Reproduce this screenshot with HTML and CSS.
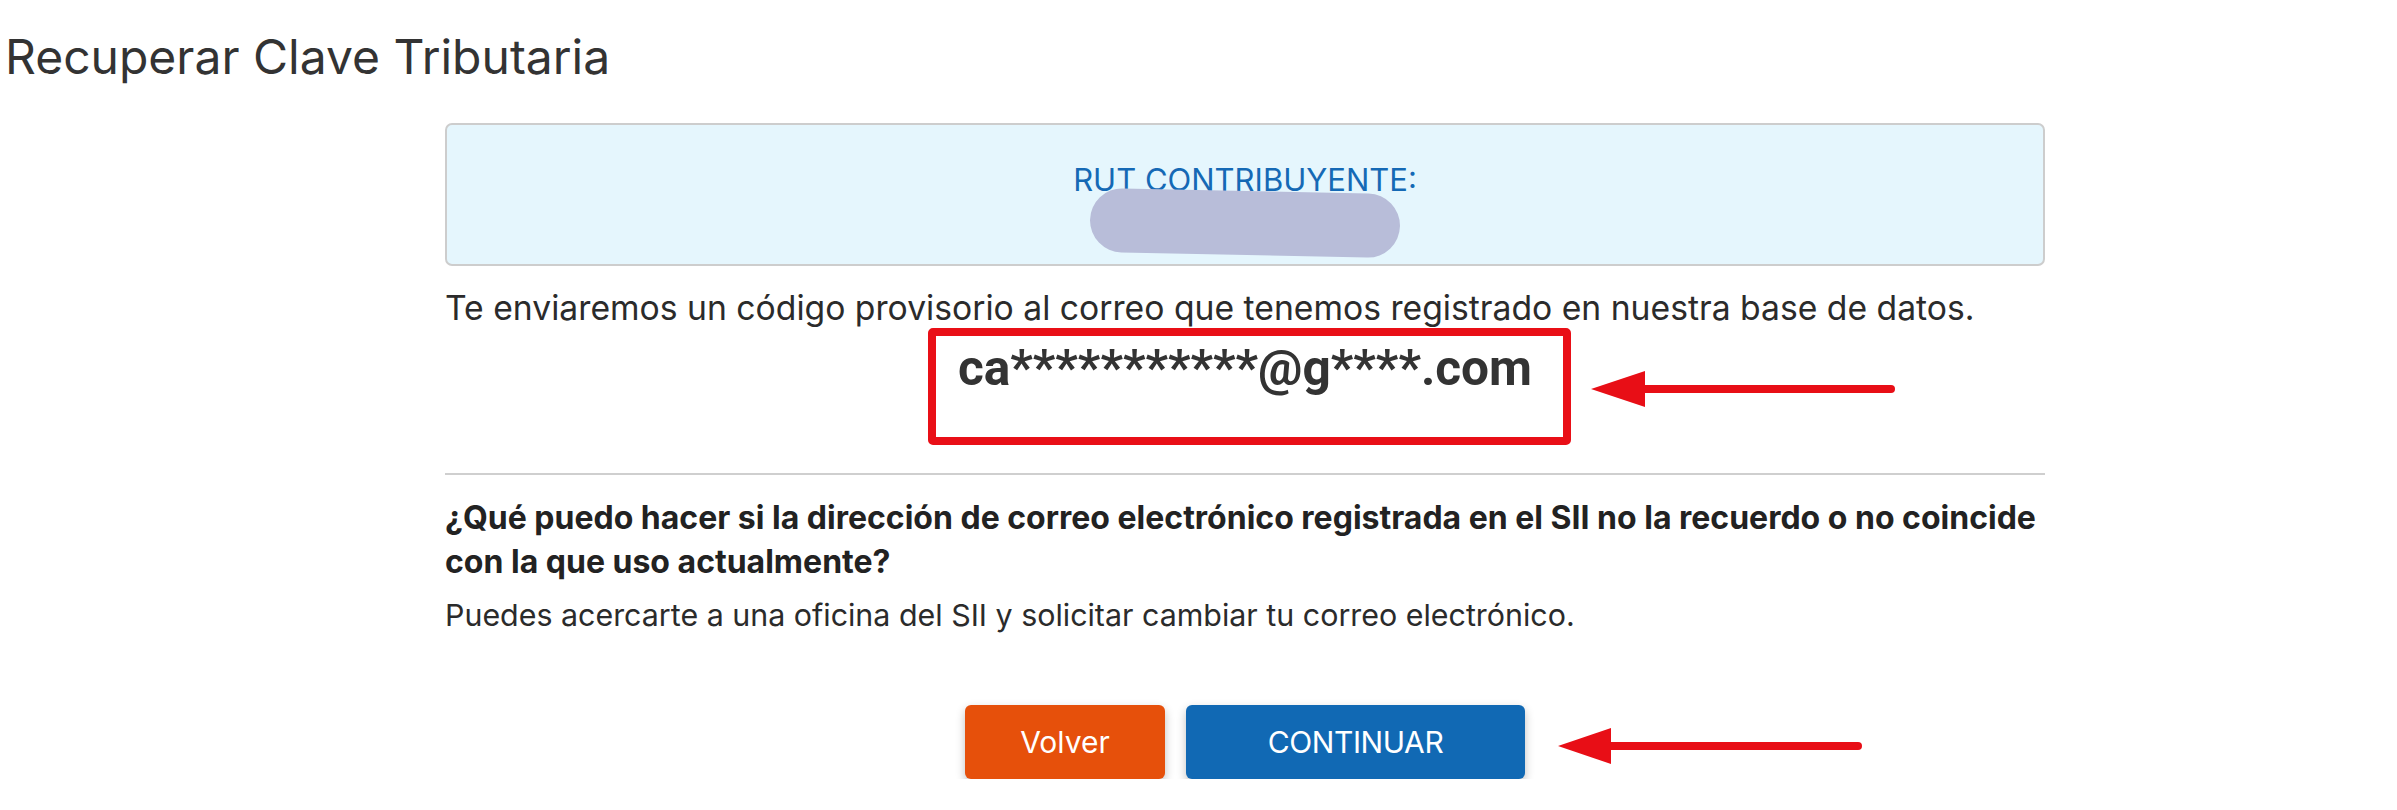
FILE: index.html
```html
<!DOCTYPE html>
<html lang="es">

<head>
    <meta charset="UTF-8">
    <meta name="viewport" content="width=device-width, initial-scale=1.0">
    <title>Recuperar Clave Tributaria</title>
    <link rel="stylesheet" href="styles.css">
</head>

<body>

    <h1 class="page-title">Recuperar Clave Tributaria</h1>

    <div class="content">

        <div class="rut-box">
            <p class="rut-label">RUT CONTRIBUYENTE:</p>
            <div class="rut-hidden"></div>
        </div>

        <p class="info">Te enviaremos un código provisorio al correo que tenemos registrado en nuestra base de datos.</p>

        <div class="mail-row">
            <div class="mail-mark">
                <p class="mail">ca***********@g****.com</p>
                <svg class="arrow arrow-mail" width="305" height="40" viewBox="0 0 305 40">
                    <line x1="50" y1="20" x2="300" y2="20" stroke="#e80e16" stroke-width="8" stroke-linecap="round" />
                    <polygon points="0,20 54,2 54,38" fill="#e80e16" />
                </svg>
            </div>
        </div>

        <hr class="sep">

        <p class="question">¿Qué puedo hacer si la dirección de correo electrónico registrada en el SII no la recuerdo o no coincide con la que uso actualmente?</p>
        <p class="answer">Puedes acercarte a una oficina del SII y solicitar cambiar tu correo electrónico.</p>

        <div class="actions">
            <div class="btn-group">
                <button class="btn btn-back">Volver</button>
                <button class="btn btn-next">CONTINUAR</button>
                <svg class="arrow arrow-btn" width="305" height="40" viewBox="0 0 305 40">
                    <line x1="50" y1="20" x2="300" y2="20" stroke="#e80e16" stroke-width="8" stroke-linecap="round" />
                    <polygon points="0,20 53,2 53,38" fill="#e80e16" />
                </svg>
            </div>
        </div>

    </div>

</body>

</html>
```

FILE: styles.css
```css
* {
    margin: 0;
    padding: 0;
    box-sizing: border-box;
}

body {
    font-family: Inter, Roboto, "Liberation Sans", Arial, sans-serif;
    color: #2b2b2b;
    background: #fff;
}

.page-title {
    font-size: 48px;
    font-weight: 400;
    line-height: normal;
    color: #333;
    margin-top: 27px;
    margin-left: 5px;
}

.content {
    width: 1600px;
    margin-left: 445px;
}

.rut-box {
    margin-top: 37px;
    background: #e5f6fd;
    border: 2px solid #cdcdcd;
    border-radius: 7px;
    padding: 36px 0 9px;
    text-align: center;
}

.rut-label {
    font-size: 31px;
    line-height: normal;
    color: #1569b5;
}

.rut-hidden {
    width: 310px;
    height: 64px;
    margin: -7px auto 0;
    background: #b8bdd9;
    border-radius: 32px;
    transform: rotate(1.2deg);
}

.info {
    margin-top: 17px;
    font-size: 33.7px;
    line-height: 1.5;
}

.mail-row {
    text-align: center;
    margin-top: -6px;
}

.mail-mark {
    display: inline-block;
    position: relative;
    margin-left: 9px;
    border: 8px solid #e90f17;
    border-radius: 5px;
    padding: 3px 31px 40px 22px;
}

.mail {
    font-family: Roboto, "Liberation Sans", Arial, sans-serif;
    font-size: 49.6px;
    font-weight: 700;
    line-height: normal;
    color: #333;
}

.arrow {
    position: absolute;
    display: block;
}

.arrow-mail {
    left: calc(100% + 28px);
    top: 33px;
}

.sep {
    margin-top: 28px;
    border: none;
    border-top: 2px solid #cfcfcf;
}

.question {
    margin-top: 21px;
    font-size: 32px;
    font-weight: 700;
    line-height: 44px;
    color: #222;
}

.answer {
    margin-top: 9px;
    font-size: 30.4px;
    line-height: 1.5;
}

.actions {
    margin-top: 67px;
    text-align: center;
}

.btn-group {
    display: inline-flex;
    gap: 21px;
    position: relative;
}

.btn {
    height: 74px;
    border: none;
    border-radius: 6px;
    color: #fff;
    font-family: Inter, Roboto, "Liberation Sans", Arial, sans-serif;
    font-size: 30px;
    cursor: pointer;
    box-shadow: 0 4px 10px rgba(0, 0, 0, 0.25);
}

.btn-back {
    width: 200px;
    background: #e6500b;
}

.btn-next {
    width: 339px;
    background: #1169b4;
    letter-spacing: -0.4px;
}

.arrow-btn {
    left: calc(100% + 33px);
    top: 21px;
}
```
